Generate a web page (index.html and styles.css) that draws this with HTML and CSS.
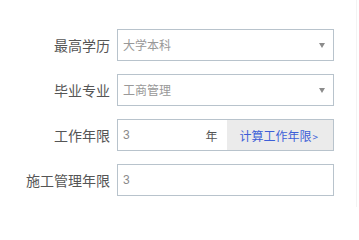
FILE: index.html
```html
<!DOCTYPE html>
<html lang="zh">
<head>
<meta charset="utf-8">
<link rel="stylesheet" href="styles.css">
</head>
<body>
<div class="page">
  <div class="row">
    <label class="label">最高学历</label>
    <div class="field select">
      <span class="value">大学本科</span>
      <span class="arrow"></span>
    </div>
  </div>
  <div class="row">
    <label class="label">毕业专业</label>
    <div class="field select">
      <span class="value">工商管理</span>
      <span class="arrow"></span>
    </div>
  </div>
  <div class="row">
    <label class="label">工作年限</label>
    <div class="field split">
      <span class="value num">3</span>
      <span class="unit">年</span>
      <span class="calc">计算工作年限<span class="gt">&gt;</span></span>
    </div>
  </div>
  <div class="row">
    <label class="label">施工管理年限</label>
    <div class="field">
      <span class="value num">3</span>
    </div>
  </div>
</div>
</body>
</html>
```

FILE: styles.css
```css
html, body {
  margin: 0;
  padding: 0;
  background: #ffffff;
}
body {
  font-family: "Liberation Sans", "Noto Sans CJK SC", sans-serif;
}
.page {
  width: 357px;
  height: 207px;
  border-right: 1px solid #f3f3f3;
  padding-top: 29px;
  box-sizing: border-box;
}
.row {
  display: flex;
  align-items: center;
  height: 32px;
  margin-bottom: 13px;
}
.label {
  width: 110px;
  margin-right: 7px;
  text-align: right;
  font-size: 14px;
  color: #555555;
  font-family: "Noto Sans CJK SC", sans-serif;
  line-height: 20px;
}
.field {
  width: 217px;
  height: 32px;
  box-sizing: border-box;
  border: 1px solid #b8c3cc;
  display: flex;
  align-items: center;
  background: #fff;
}
.value {
  flex: 1;
  padding-left: 5px;
  font-size: 12px;
  color: #999999;
  font-family: "Noto Sans CJK SC", sans-serif;
  line-height: 16px;
}
.value.num {
  font-family: "Liberation Sans", sans-serif;
  color: #8a8a8a;
}
.arrow {
  width: 0;
  height: 0;
  border-left: 3px solid transparent;
  border-right: 3px solid transparent;
  border-top: 5px solid #8c8c8c;
  margin-right: 8px;
}
.unit {
  font-size: 12px;
  color: #555555;
  font-family: "Noto Sans CJK SC", sans-serif;
  margin-right: 10px;
}
.calc {
  align-self: stretch;
  display: flex;
  align-items: center;
  background: #ebebeb;
  padding: 0 15px 0 12px;
  font-size: 12px;
  color: #3d5fd8;
  font-family: "Noto Sans CJK SC", sans-serif;
}
.gt {
  font-size: 10px;
  margin-left: 1px;
  padding-top: 2px;
}
```
